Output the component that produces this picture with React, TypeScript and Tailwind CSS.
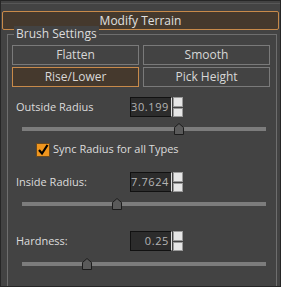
import React from 'react'

const FONT = { fontFamily: '"Open Sans", "Noto Sans", sans-serif' }

function Spinner() {
  return (
    <div className="flex flex-col gap-px w-[10px] h-[20px] ml-px">
      <div className="flex-1 bg-[#e6e6e6] border border-[#9a9a9a]" />
      <div className="flex-1 bg-[#e6e6e6] border border-[#9a9a9a]" />
    </div>
  )
}

function NumberField({ label, value }: { label: string; value: string }) {
  return (
    <div className="flex items-center h-[20px]">
      <span className="w-[118px] pl-[4px] text-[11px] text-[#dcdcdc]">{label}</span>
      <div className="w-[42px] h-[20px] bg-[#2c2c2c] border border-[#111] border-r-[#e0e0e0] flex items-center justify-end pr-[2px] text-[11px] text-[#b4b4b4] tracking-[0.6px]">
        {value}
      </div>
      <Spinner />
    </div>
  )
}

function Slider({ pos }: { pos: number }) {
  return (
    <div className="relative ml-[10px] w-[244px] h-[12px] flex items-center">
      <div className="w-full h-[4px] bg-[#7c7c7c]" />
      <svg
        className="absolute top-0"
        style={{ left: pos - 5 }}
        width="10"
        height="12"
        viewBox="0 0 10 12"
      >
        <path d="M0.5 11.5 V4.5 L5 0.5 L9.5 4.5 V11.5 Z" fill="#5a5a5a" stroke="#1c1c1c" />
      </svg>
    </div>
  )
}

export default function App() {
  return (
    <div className="w-[281px] h-[287px] bg-[#262626] p-px" style={FONT}>
      <div className="w-full h-full bg-[#434343] overflow-hidden flex flex-col">
        {/* title strip */}
        <div className="h-[2px]" />
        <div className="h-px bg-[#575757]" />
        <div className="h-[7px]" />
        <div className="mx-px h-[19px] bg-[#45392d] border border-[#c88a4a] rounded-[2px] flex items-center justify-center text-[12px] text-[#e0e0e0]">
          Modify Terrain
        </div>

        {/* Brush Settings group */}
        <div className="relative mt-[4px] ml-[6px] mr-[3px] flex-1 border-l border-r border-t border-[#6e6e6e] pt-[10px] pl-[4px]">
          <span className="absolute -top-[9px] left-[6px] px-[2px] bg-[#434343] text-[12px] text-[#dcdcdc] leading-[16px]">
            Brush Settings
          </span>
          <div className="grid grid-cols-[127px_127px] gap-x-[4px] gap-y-[2px]">
            <button className="h-[20px] border border-[#7a7a7a] bg-[#434343] text-[12px] text-[#d8d8d8]">Flatten</button>
            <button className="h-[20px] border border-[#7a7a7a] bg-[#434343] text-[12px] text-[#d8d8d8]">Smooth</button>
            <button className="h-[20px] border border-[#c88a4a] bg-[#45392d] text-[12px] text-[#d8d8d8]">Rise/Lower</button>
            <button className="h-[20px] border border-[#7a7a7a] bg-[#434343] text-[12px] text-[#d8d8d8]">Pick Height</button>
          </div>

          <div className="mt-[10px]">
            <NumberField label="Outside Radius" value="30.199" />
          </div>
          <div className="mt-[6px]">
            <Slider pos={157} />
          </div>
          <div className="mt-[7px] ml-[24px] flex items-center gap-[3px] h-[15px]">
            <div className="w-[14px] h-[14px] bg-[#f0961e] border border-[#6a4a20] flex items-center justify-center">
              <svg width="12" height="12" viewBox="0 0 12 12">
                <path d="M2 6 L5 9.5 L10.5 1" fill="none" stroke="#000" strokeWidth="2.2" />
              </svg>
            </div>
            <span className="text-[11px] text-[#dcdcdc]">Sync Radius for all Types</span>
          </div>
          <div className="mt-[15px]">
            <NumberField label="Inside Radius:" value="7.7624" />
          </div>
          <div className="mt-[6px]">
            <Slider pos={95} />
          </div>
          <div className="mt-[21px]">
            <NumberField label="Hardness:" value="0.25" />
          </div>
          <div className="mt-[7px]">
            <Slider pos={65} />
          </div>
        </div>
      </div>
    </div>
  )
}
